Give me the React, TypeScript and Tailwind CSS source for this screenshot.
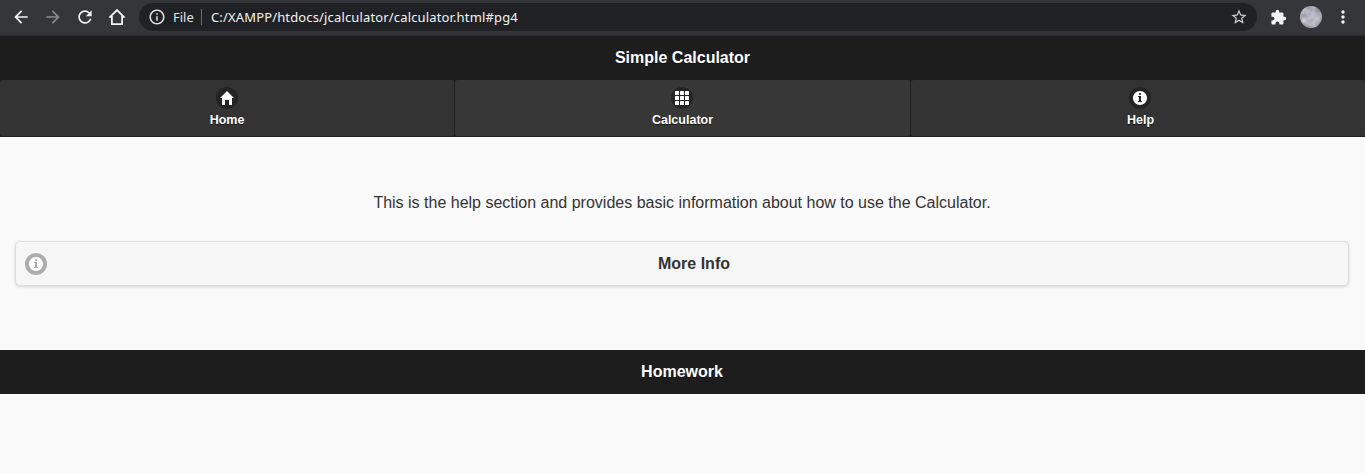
import React from "react";
import {
  MdArrowBack,
  MdArrowForward,
  MdRefresh,
  MdOutlineInfo,
  MdStarBorder,
  MdExtension,
  MdMoreVert,
} from "react-icons/md";

const INFO_PATH =
  "M7,0C3.134,0,0,3.134,0,7c0,3.866,3.134,7,7,7s7-3.134,7-7C14,3.134,10.866,0,7,0z M7,2c0.552,0,1,0.447,1,1S7.552,4,7,4S6,3.553,6,3S6.448,2,7,2z M9,11H5v-1h1V6H5V5h3v5h1V11z";

function Glyph({ name }: { name: "home" | "grid" | "info" }) {
  return (
    <svg width="14" height="14" viewBox="0 0 14 14" fill="#fff">
      {name === "home" && (
        <polygon points="7,0 0,7 2,7 2,14 5,14 5,9 9,9 9,14 12,14 12,7 14,7" />
      )}
      {name === "grid" &&
        [0, 5, 10].flatMap((y) =>
          [0, 5, 10].map((x) => (
            <rect key={`${x}-${y}`} x={x} y={y} width="4" height="4" rx="0.6" />
          ))
        )}
      {name === "info" && <path d={INFO_PATH} />}
    </svg>
  );
}

function BrowserBar() {
  return (
    <div className="flex h-9 items-start border-b border-[#28292b] bg-[#35363a] pt-[3px] text-[#f1f3f4]">
      <div className="flex h-7 w-[139px] items-center gap-3 pl-[11px]">
        <MdArrowBack size={20} />
        <MdArrowForward size={20} className="text-[#88898c]" />
        <MdRefresh size={20} />
        <svg width="20" height="20" viewBox="0 0 20 20" fill="none" stroke="currentColor" strokeWidth="1.8">
          <path d="M2.4 10.6 10 3l7.6 7.6M4.9 9v8.1h10.2V9" />
        </svg>
      </div>
      <div className="flex h-7 w-[1118px] items-center rounded-full bg-[#202124] pl-[9px] font-['Noto_Sans',sans-serif] text-[13px]">
        <MdOutlineInfo size={18} className="text-[#e0e2e5]" />
        <span className="ml-[7px] w-[21px] whitespace-nowrap pt-px text-[#e0e2e5]">File</span>
        <span className="ml-[7px] h-4 w-px bg-[#6b6c6f]" />
        <span className="ml-[9px] whitespace-nowrap pt-px tracking-[0.15px]">C:/XAMPP/htdocs/jcalculator/calculator.html#pg4</span>
        <MdStarBorder size={18} className="ml-auto mr-[9px] text-[#d0d2d5]" />
      </div>
      <div className="flex h-7 items-center">
        <MdExtension size={17} className="ml-[13px]" />
        <svg width="22" height="22" viewBox="0 0 22 22" className="ml-[13px]">
          <defs>
            <filter id="clouds" x="0" y="0" width="1" height="1" colorInterpolationFilters="sRGB">
              <feTurbulence type="fractalNoise" baseFrequency="0.12" numOctaves="2" seed="4" />
              <feColorMatrix values="0.5 0 0 0 0.46  0.5 0 0 0 0.455  0.5 0 0 0 0.5  0 0 0 0 1" />
              <feComposite in2="SourceGraphic" operator="in" />
            </filter>
          </defs>
          <circle cx="11" cy="11" r="11" fill="#b8b7c1" filter="url(#clouds)" />
        </svg>
        <MdMoreVert size={20} className="ml-[11px]" />
      </div>
    </div>
  );
}

const TABS = [
  { label: "Home", icon: "home", cell: "w-[455px] bg-[#333] pr-px" },
  { label: "Calculator", icon: "grid", cell: "w-[456px] bg-[#373737] pr-px" },
  { label: "Help", icon: "info", cell: "w-[454px] bg-[#333] pl-1" },
] as const;

export default function App() {
  return (
    <div className="h-[473px] w-[1365px] overflow-hidden bg-[#f9f9f9] font-['Liberation_Sans',sans-serif] text-base text-[#333]">
      <BrowserBar />
      <header className="flex h-11 items-center justify-center bg-[#1d1d1d] font-bold text-white">
        <h1 className="[text-shadow:0_1px_0_#111]">Simple Calculator</h1>
      </header>
      <nav className="flex h-[57px] bg-[#1f1f1f]">
        {TABS.map((tab) => (
          <a
            key={tab.label}
            className={`flex flex-col items-center rounded-[3px] border-b border-r border-[#1f1f1f] pt-[7px] text-white last:border-r-0 ${tab.cell}`}
          >
            <span className="flex size-[22px] items-center justify-center rounded-full bg-[#242424]">
              <Glyph name={tab.icon} />
            </span>
            <span className="mt-[3px] pl-px text-[12.5px] font-bold leading-4 [text-shadow:0_1px_0_#111]">{tab.label}</span>
          </a>
        ))}
      </nav>
      <main className="h-[213px] px-[15px] pr-4 pt-[54px] text-center">
        <p className="leading-6">This is the help section and provides basic information about how to use the Calculator.</p>
        <button className="mt-[26px] flex h-[45px] w-full items-center rounded-[5px] border border-[#ddd] bg-[#f6f6f6] pl-[9px] shadow-[0_1px_3px_rgba(0,0,0,0.15)]">
          <span className="flex size-[22px] items-center justify-center rounded-full bg-[#acacac]">
            <Glyph name="info" />
          </span>
          <span className="flex-1 pl-[9px] pr-4 font-bold [text-shadow:0_1px_0_#f3f3f3]">More Info</span>
        </button>
      </main>
      <footer className="flex h-11 items-center justify-center bg-[#1d1d1d] pr-px font-bold text-white">
        <h2 className="[text-shadow:0_1px_0_#111]">Homework</h2>
      </footer>
    </div>
  );
}
